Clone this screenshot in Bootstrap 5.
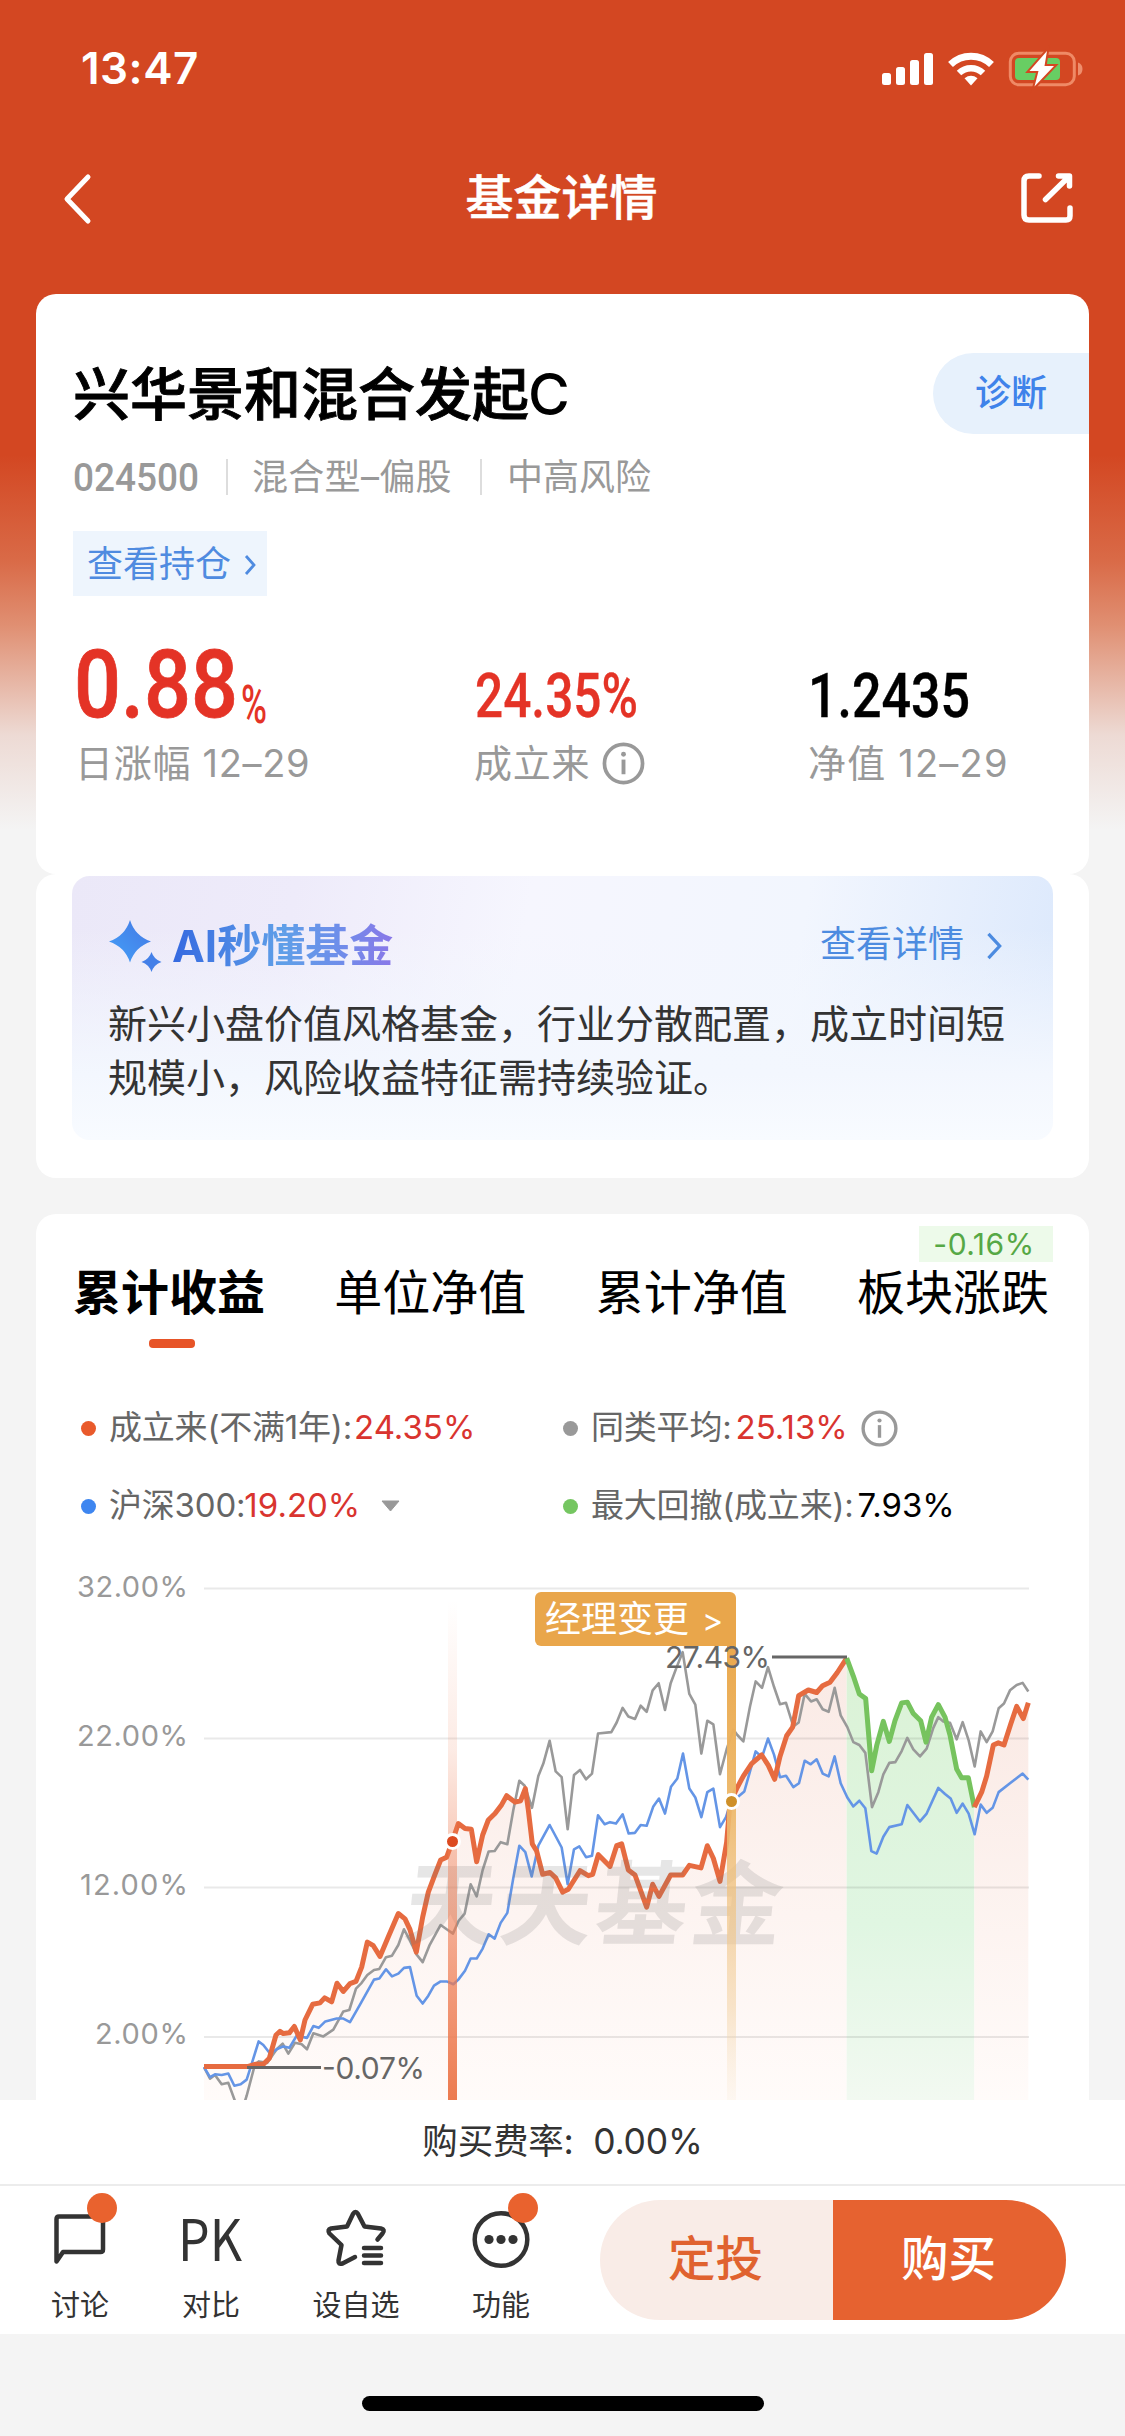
<!DOCTYPE html>
<html lang="zh-CN">
<head>
<meta charset="utf-8">
<meta name="viewport" content="width=device-width, initial-scale=1">
<title>基金详情</title>
<link href="https://cdn.jsdelivr.net/npm/bootstrap@5.3.0/dist/css/bootstrap.min.css" rel="stylesheet">
<style>
  :root { --brand:#d34722; --accent:#e66230; --rise:#e43326; --link:#4f8be0; --mute:#999; }
  body { width:1125px; height:2436px; overflow:hidden; background:#f4f4f4; color:#333;
    font-family:Inter,"Noto Sans CJK SC",sans-serif; font-size:36px; line-height:1.2; }
  svg { overflow:visible; }
  .app { height:2436px; background:linear-gradient(#d34722 0,#d34722 455px,#d96a47 560px,#e08f72 625px,#eddad4 735px,#f4f4f4 830px,#f4f4f4 100%); }
  .status-row { height:137px; padding:0 43px 0 81px; }
  .status-row .clock { font-size:44px; font-weight:600; line-height:139px; letter-spacing:.5px; }
  .title-row { height:120px; padding:2px 52px 0 62px; }
  .title-row h1 { font-size:48px; font-weight:500; line-height:60px; -webkit-text-stroke:.5px #fff; padding-left:10px; }
  .feed { padding:37px 36px 0; height:1843px; overflow:hidden; }
  .panel { background:#fff; border-radius:20px; }
  .p-fund { height:580px; padding:59px 0 0 37px; }
  .fund-name { font-size:57px; font-weight:500; color:#000; line-height:84px; height:81px; -webkit-text-stroke:.9px #000; }
  .fund-name span { margin-left:-1px; -webkit-text-stroke:0; }
  .diag { width:156px; height:81px; border-radius:41px 0 0 41px; background:#e7f1fc; color:#3f83ea; padding-left:42px; line-height:80px; font-weight:500; }
  .meta-row { height:44px; margin-top:21px; color:var(--mute); line-height:44px; }
  .meta-row .divide { width:2px; height:36px; background:#ddd; margin:0 25px 0 27px; }
  .meta-row .kind { width:202px; margin-left:-1px; letter-spacing:.3px; white-space:nowrap; }
  .hold { width:194px; height:65px; margin-top:32px; background:#eef5fd; color:var(--link); padding:2px 11px 0 14px; }
  .stat-row { margin-top:33px; color:var(--mute); }
  .stat-row svg.num { display:block; height:104px; }
  .stat-row .lbl { height:60px; line-height:61px; font-size:38px; letter-spacing:.7px; }
  .p-ai { height:304px; padding:2px 36px 0 36px; }
  .ai-box { height:264px; border-radius:18px; padding:43px 48px 0 36px;
    background:linear-gradient(180deg,rgba(244,248,254,0) 20%,#f3f7fe 75%,#f8fbff 100%),linear-gradient(100deg,#ebe8f8 0,#eeebfa 22%,#f6f6fe 45%,#f2f6fe 72%,#dbe8fc 100%); }
  .ai-title { font-size:44px; font-weight:700; line-height:52px; margin-left:8px; background:linear-gradient(90deg,#3569e0,#5f9fe8 50%,#6e8eea 75%,#8a78e8); -webkit-background-clip:text; background-clip:text; color:transparent; }
  .ai-link { color:#4c8be0; position:relative; top:-1px; }
  .ai-copy { font-size:39px; line-height:54px; margin:24px 0 0; white-space:nowrap; }
  .p-chart { height:922px; margin-top:36px; border-radius:20px 20px 0 0; }
  .tab-row { padding:49px 40px 0 37px; height:140px; }
  .tab-row .tab { font-size:48px; line-height:60px; color:#000; position:relative; white-space:nowrap; }
  .tab-row .active { font-weight:700; }
  .tab-row .active::after { content:""; position:absolute; left:76px; top:76px; width:46px; height:9px; border-radius:4px; background:#e75427; }
  .drop-tag { position:absolute; left:62px; top:-37px; width:134px; height:36px; background:#edfaea; color:#56a845; font-size:30px; line-height:36px; text-align:center; letter-spacing:.5px; padding-right:4px; }
  .legend { padding:48px 0 0 45px; font-size:33px; color:#666; }
  .legend .item { height:52px; white-space:nowrap; }
  .legend .item + .item { margin-top:26px; }
  .legend .col-l { width:482px; }
  .legend .dot { width:15px; height:15px; border-radius:50%; margin-right:13px; flex:none; }
  .legend span { letter-spacing:-.2px; }
  .legend b { font-weight:400; color:#d9342f; letter-spacing:0; margin-left:2px; }
  .legend .col-r b { margin-left:4px; }
  .chart { display:block; margin-top:14px; overflow:hidden; }
  .fee { height:84px; background:#fff; line-height:84px; color:#333; font-size:35.500px; letter-spacing:-.2px; }
  .tools { height:150px; background:#fff; border-top:2px solid #ececec; padding-top:16px; padding-left:36px; }
  .tool { font-size:29px; line-height:36px; position:relative; text-align:center; color:#333; }
  .tool svg { display:block; margin:7px auto 19px; }
  .reddot { position:absolute; width:30px; height:30px; border-radius:50%; background:#e9622e; top:-9px; }
  .act { width:233px; height:120px; font-size:47.500px; font-weight:500; line-height:117px; text-align:center; padding-right:2px; }
  .act-l { background:#f9ece7; color:#e0622f; border-radius:60px 0 0 60px; }
  .act-r { background:var(--accent); color:#fff; border-radius:0 60px 60px 0; }
  .home { height:102px; background:#f4f4f4; padding-top:62px; }
  .home div { width:402px; height:15px; border-radius:8px; background:#000; }
</style>
<script src="https://cdn.jsdelivr.net/npm/bootstrap@5.3.0/dist/js/bootstrap.bundle.min.js"></script>
</head>
<body>
<div class="app d-flex flex-column">
  <div class="status-row d-flex justify-content-between align-items-center text-white">
    <span class="clock">13:47</span>
    <svg width="201" height="36" viewBox="881 51 201 36" fill="#fff">
      <rect x="882" y="73" width="9" height="12" rx="2.5"/><rect x="896" y="67" width="9" height="18" rx="2.5"/><rect x="910" y="60" width="9" height="25" rx="2.5"/><rect x="924" y="53" width="9" height="32" rx="2.5"/>
      <g fill="none" stroke="#fff" stroke-width="7"><path d="M950.5 64.500a29.500 29.500 0 0 1 41 0"/><path d="M959 73a17.500 17.500 0 0 1 24 0" stroke-width="6.500"/></g>
      <path d="M971 85.500l-6.500-7.300q6.500-4.800 13 0z"/>
      <rect x="1010.300" y="53.300" width="64" height="31.500" rx="8.500" fill="none" stroke="#ef8a66" stroke-width="3"/>
      <rect x="1015" y="58" width="45" height="22" rx="4" fill="#68ce63"/>
      <path d="M1078 62.500q4.500 1.500 4.500 6.500t-4.500 6.500z" fill="#ee8e6d"/>
      <path d="M1047 51l-17.500 20h9l-4 15.500 19.500-20.500h-9.500z" stroke="#d34722" stroke-width="4" paint-order="stroke"/>
    </svg>
  </div>
  <div class="title-row d-flex justify-content-between align-items-center text-white">
    <svg width="30" height="52" viewBox="0 0 30 52" fill="none" stroke="#fff" stroke-width="5" stroke-linecap="round" stroke-linejoin="round"><path d="M26 5L5 27l21 22"/></svg>
    <h1 class="m-0">基金详情</h1>
    <svg width="52" height="52" viewBox="1021 173 52 52" fill="none" stroke="#fff" stroke-width="5.500" stroke-linecap="round" stroke-linejoin="round"><path d="M1039 177h-10q-5 0-5 5v34q0 5 5 5h37q4 0 4-4v-8M1058.500 177h11v10M1068.500 178L1045.500 200.500"/></svg>
  </div>

  <main class="feed">
    <section class="panel p-fund">
      <div class="d-flex justify-content-between">
        <div class="fund-name">兴华景和混合发起<span>C</span></div>
        <div class="diag">诊断</div>
      </div>
      <div class="meta-row d-flex align-items-center">
        <svg width="126" height="40"><text x="0" y="34" font-size="39.500" font-weight="500" fill="#999" font-family="Roboto" textLength="126" lengthAdjust="spacingAndGlyphs">024500</text></svg>
        <span class="divide"></span><span class="kind">混合型–偏股</span>
        <span class="divide" style="margin-left:26px"></span><span>中高风险</span>
      </div>
      <div class="hold d-flex align-items-center justify-content-between"><span>查看持仓</span>
        <svg width="12" height="22" viewBox="0 0 12 22" fill="none" stroke="#4f8be0" stroke-width="2.800"><path d="M2 2l8 9-8 9"/></svg></div>
      <div class="stat-row d-flex">
        <div style="width:401px">
          <svg class="num" width="220" font-family="Roboto" font-weight="500" fill="#e43326"><text x="1" y="88" font-size="95" stroke="#e43326" stroke-width=".8" textLength="164" lengthAdjust="spacingAndGlyphs">0.88</text><text x="168" y="94" font-size="53" textLength="26" lengthAdjust="spacingAndGlyphs">%</text></svg>
          <div class="lbl" style="padding-left:2px">日涨幅 12–29</div>
        </div>
        <div style="width:334px">
          <svg class="num" width="200" font-family="Roboto" font-weight="500" fill="#e43326"><text x="1" y="88" font-size="61" stroke="#e43326" stroke-width=".3" textLength="163" lengthAdjust="spacingAndGlyphs">24.35%</text></svg>
          <div class="lbl d-flex align-items-center">成立来
            <svg style="margin-left:12px" width="43" height="43" viewBox="0 0 44 44" fill="none" stroke="#999" stroke-width="3.800"><circle cx="22" cy="22" r="19.500"/><path d="M22 18v15" stroke-width="4"/><circle cx="22" cy="12.500" r="2.500" fill="#999" stroke="none"/></svg></div>
        </div>
        <div>
          <svg class="num" width="200" font-family="Roboto" font-weight="500" fill="#000"><text x="0" y="88" font-size="61" stroke="#000" stroke-width=".4" textLength="162" lengthAdjust="spacingAndGlyphs">1.2435</text></svg>
          <div class="lbl" style="letter-spacing:1.2px">净值 12–29</div>
        </div>
      </div>
    </section>

    <section class="panel p-ai">
      <div class="ai-box">
        <div class="d-flex align-items-center">
          <svg width="56" height="54" viewBox="0 0 56 54"><defs><linearGradient id="st" x1="0" y1="1" x2="1" y2="0"><stop offset="0" stop-color="#44a0f8"/><stop offset="1" stop-color="#4478e4"/></linearGradient></defs>
            <path fill="url(#st)" d="M22 1q5 16 21 21.500q-16 5.500-21 21q-5-15.500-21-21q16-5.500 21-21.500z"/><path fill="#4480e8" d="M43.500 33q2.500 7.500 10 10q-7.500 2.500-10 10q-2.500-7.500-10-10q7.500-2.500 10-10z"/></svg>
          <span class="ai-title">AI秒懂基金</span>
          <span class="ai-link ms-auto">查看详情</span>
          <svg style="margin-left:21px" width="20" height="28" viewBox="0 0 20 30" fill="none" stroke="#4c8be0" stroke-width="3.500"><path d="M3 2l12 13L3 28"/></svg>
        </div>
        <p class="ai-copy">新兴小盘价值风格基金，行业分散配置，成立时间短<br>规模小，风险收益特征需持续验证。</p>
      </div>
    </section>

    <section class="panel p-chart">
      <div class="tab-row d-flex justify-content-between">
        <div class="tab active">累计收益</div><div class="tab">单位净值</div><div class="tab">累计净值</div>
        <div class="tab">板块涨跌<span class="drop-tag">-0.16%</span></div>
      </div>
      <div class="legend d-flex">
        <div class="col-l">
          <div class="item d-flex align-items-center"><i class="dot" style="background:#e95a2b"></i><span>成立来(不满1年):</span><b>24.35%</b></div>
          <div class="item d-flex align-items-center"><i class="dot" style="background:#3e86f0"></i><span>沪深300:</span><b style="margin-left:-1px">19.20%</b><svg style="margin-left:21px" width="19" height="12"><path d="M1 1h17l-8.500 10z" fill="#999" stroke="#999" stroke-linejoin="round"/></svg></div>
        </div>
        <div class="col-r">
          <div class="item d-flex align-items-center"><i class="dot" style="background:#999"></i><span>同类平均:</span><b>25.13%</b><svg style="margin-left:13px" width="37" height="37" viewBox="0 0 44 44" fill="none" stroke="#999" stroke-width="4"><circle cx="22" cy="22" r="19.500"/><path d="M22 18v15"/><circle cx="22" cy="12.500" r="2.500" fill="#999" stroke="none"/></svg></div>
          <div class="item d-flex align-items-center"><i class="dot" style="background:#75c661"></i><span>最大回撤(成立来):</span><b class="text-black">7.93%</b></div>
        </div>
      </div>
      <svg class="chart" width="1053" height="554" viewBox="36 1546 1053 554" font-family="Inter,'Noto Sans CJK SC',sans-serif">
        <defs>
          <linearGradient id="fo" x1="0" y1="0" x2="0" y2="1"><stop offset="0" stop-color="#f9e6e0" stop-opacity=".85"/><stop offset="1" stop-color="#fffaf8" stop-opacity=".8"/></linearGradient>
          <linearGradient id="fg" x1="0" y1="0" x2="0" y2="1"><stop offset="0" stop-color="#dbf2d6"/><stop offset=".6" stop-color="#e0f6e2"/><stop offset="1" stop-color="#f2f9f1"/></linearGradient>
          <linearGradient id="b1" x1="0" y1="0" x2="0" y2="1"><stop offset="0" stop-color="#ee7a50" stop-opacity="0"/><stop offset=".3" stop-color="#ee7a50" stop-opacity=".15"/><stop offset=".7" stop-color="#ee7a50" stop-opacity=".65"/><stop offset="1" stop-color="#ec7b50"/></linearGradient>
          <linearGradient id="b2" x1="0" y1="0" x2="0" y2="1"><stop offset="0" stop-color="#eaa84c"/><stop offset=".35" stop-color="#edb768" stop-opacity=".95"/><stop offset=".8" stop-color="#f2cf9c" stop-opacity=".5"/><stop offset="1" stop-color="#f5dfc0" stop-opacity=".15"/></linearGradient>
        </defs>
        <g transform="translate(180 1560) scale(.33333 .35714)"><path id="areaO" fill="url(#fo)"/><path id="areaG" fill="url(#fg)"/><path id="areaP" fill="url(#fo)"/></g>
        <g stroke="#000" stroke-opacity=".085" stroke-width="2"><path d="M204 1588.500H1029M204 1738.500H1029M204 1887.500H1029M204 2037H1029"/></g>
        <g font-size="29" fill="#999" text-anchor="end"><text x="188" y="1597" textLength="111">32.00%</text><text x="188" y="1746" textLength="111">22.00%</text><text x="188" y="1895" textLength="108">12.00%</text><text x="188" y="2044" textLength="93">2.00%</text></g>
        <g transform="translate(180 1560) scale(.33333 .35714)" fill="none" stroke-linejoin="round">
          <g stroke-width="2.600"><path id="gray" stroke="#999" vector-effect="non-scaling-stroke"/><path id="blue" stroke="#6495e6" vector-effect="non-scaling-stroke"/></g>
          <g stroke-width="5"><path id="red1" stroke="#e66b40" vector-effect="non-scaling-stroke"/><path id="green" stroke="#76c35e" vector-effect="non-scaling-stroke"/><path id="red2" stroke="#e66b40" vector-effect="non-scaling-stroke"/></g>
        </g>
        <g transform="translate(592 1946) skewX(-6)"><text x="-2" y="-8" text-anchor="middle" font-family="Noto Sans CJK SC" font-weight="700" font-size="92" fill="#777" fill-opacity=".18" textLength="378">天天基金</text></g>
        <rect x="448" y="1600" width="9" height="500" fill="url(#b1)"/>
        <rect x="727" y="1640" width="9" height="460" fill="url(#b2)"/>
        <path d="M247 2067.500H321M772 1657H847" stroke="#666" stroke-width="3"/>
        <g font-size="30" fill="#666"><text x="322" y="2079" textLength="103">-0.07%</text><text x="665" y="1668" textLength="105">27.43%</text></g>
        <rect x="535" y="1592" width="201" height="54" rx="6" fill="#e9a64b"/>
        <text x="545" y="1632" font-size="36" fill="#fff"><tspan>经理变更</tspan><tspan x="702" font-size="32">&gt;</tspan></text>
        <g stroke="#fff" stroke-width="3"><circle cx="452.500" cy="1841.500" r="7" fill="#dc4a20"/><circle cx="731.500" cy="1801.500" r="7" fill="#cf9029"/></g>
      </svg>
    </section>
  </main>

  <div class="fee text-center">购买费率:&nbsp; 0.00%</div>
  <div class="tools d-flex">
    <div class="tool" style="width:88px"><svg width="60" height="60" viewBox="50 2209 60 60" fill="none" stroke="#333" stroke-width="4.500" stroke-linejoin="round"><path d="M56.500 2261.500V2219q0-2.500 2.500-2.500h41.500q2.500 0 2.500 2.500v30.500q0 2.500-2.500 2.500H63z"/></svg>讨论<i class="reddot" style="left:51px"></i></div>
    <div class="tool" style="width:88px; margin-left:43px"><svg width="62" height="60" viewBox="0 0 62 60"><text x="-2" y="52" font-size="57" font-weight="400" font-family="Noto Sans CJK SC" fill="#333" textLength="64" lengthAdjust="spacingAndGlyphs">PK</text></svg>对比</div>
    <div class="tool" style="width:100px; margin-left:51px"><svg width="62" height="60" viewBox="326 2209 62 60" fill="none" stroke="#333" stroke-width="4.500" stroke-linecap="round" stroke-linejoin="round"><path d="M378.500 2239.500l5-6q3-4-1.500-5l-16.500-2-6.500-12.500q-2.500-4-5 0l-6 12.500-16 2q-4 1-1.500 5l12 11.500-3 15.500q-.5 4.500 4 3l12.500-6.500"/><path d="M365 2248h17M365 2255.500h17M365 2263h17"/></svg>设自选</div>
    <div class="tool" style="width:88px; margin-left:51px"><svg width="60" height="60" viewBox="470.500 2209 60 60"><circle cx="500.500" cy="2239.500" r="26.300" fill="none" stroke="#333" stroke-width="4.500"/><g fill="#333"><circle cx="488.500" cy="2239.500" r="4.600"/><circle cx="500.500" cy="2239.500" r="4.600"/><circle cx="512.500" cy="2239.500" r="4.600"/></g></svg>功能<i class="reddot" style="left:51px"></i></div>
    <div class="d-flex" style="margin-left:55px; margin-top:-2px"><div class="act act-l">定投</div><div class="act act-r">购买</div></div>
  </div>
  <div class="home d-flex justify-content-center"><div></div></div>
</div>
<script>
  const red1 = "72,1418 205,1418 225,1412 250,1412 268,1395 288,1330 300,1320 310,1326 328,1324 343,1306 361,1344 375,1288 398,1244 420,1240 434,1226 455,1237 471,1185 490,1208 510,1186 528,1180 545,1140 562,1070 580,1080 600,1110 625,1055 655,990 675,1005 690,1035 709,1098 728,1000 745,930 765,880 782,840 800,832 817,788 835,738 855,752 874,754 890,845 908,770 925,728 945,710 965,685 980,660 1005,678 1022,674 1036,640 1045,700 1057,795 1070,815 1088,880 1110,875 1127,890 1148,930 1165,922 1200,870 1225,884 1238,880 1255,825 1290,858 1310,800 1325,795 1345,868 1365,882 1400,972 1418,908 1437,942 1472,882 1508,882 1528,855 1563,862 1582,800 1600,835 1620,900 1640,790 1650,680 1670,640 1690,605 1715,570 1745,546 1765,575 1784,614 1800,550 1820,492 1838,468 1856,380 1885,364 1910,371 1928,352 1950,342 1972,315 2000,275";
  const green = "2000,275 2020,325 2038,375 2057,388 2075,590 2090,520 2110,452 2128,508 2145,450 2165,400 2182,398 2200,430 2222,450 2238,510 2255,440 2275,405 2295,440 2310,490 2330,585 2345,610 2365,610 2383,692";
  const red2 = "2383,692 2405,650 2420,605 2440,518 2455,512 2472,518 2492,460 2510,410 2530,444 2545,400";
  const gray = "72,1420 90,1452 105,1442 125,1468 145,1464 165,1515 180,1560 200,1500 225,1412 237,1404 262,1408 290,1370 308,1354 325,1382 345,1352 365,1356 381,1370 400,1325 430,1334 460,1315 490,1264 508,1260 528,1200 545,1184 562,1162 582,1148 598,1145 618,1112 636,1108 655,1078 672,1034 690,1065 710,1105 728,1126 748,1080 782,1022 800,1034 819,1046 836,1010 854,990 872,908 890,942 908,868 926,816 944,815 962,790 982,796 1000,700 1018,618 1034,632 1056,694 1075,605 1090,570 1109,506 1127,592 1145,608 1163,754 1182,602 1200,588 1218,614 1236,598 1254,486 1294,482 1310,455 1328,414 1345,438 1365,445 1382,408 1400,425 1418,365 1436,345 1455,420 1472,345 1490,300 1508,258 1528,375 1546,405 1564,542 1582,450 1600,460 1620,600 1640,530 1660,475 1672,490 1690,508 1710,410 1727,340 1746,358 1764,300 1782,355 1800,404 1818,400 1840,466 1856,455 1874,375 1893,396 1910,390 1928,418 1946,425 1964,358 1982,435 2002,468 2020,510 2038,518 2056,540 2076,692 2095,650 2110,600 2128,568 2146,566 2165,535 2182,498 2200,530 2220,550 2240,528 2260,470 2275,440 2290,452 2310,456 2330,502 2348,454 2366,505 2384,578 2402,480 2420,510 2438,480 2456,415 2472,402 2490,365 2510,350 2528,344 2545,368";
  const blue = "72,1420 90,1448 105,1440 125,1442 145,1438 163,1472 182,1468 200,1455 212,1420 236,1348 250,1358 270,1382 290,1370 310,1362 328,1366 350,1332 381,1338 400,1305 416,1310 436,1292 470,1284 490,1284 510,1294 540,1245 582,1175 598,1172 618,1146 636,1166 655,1158 672,1142 690,1140 700,1180 710,1220 728,1242 745,1220 762,1192 782,1180 800,1180 820,1188 835,1175 855,1150 872,1116 890,1116 908,1088 926,1048 944,1060 962,1016 982,988 1000,890 1018,800 1036,818 1055,886 1075,800 1109,742 1145,805 1163,908 1182,810 1198,802 1218,832 1236,828 1254,715 1274,740 1290,734 1308,738 1328,712 1346,766 1365,764 1382,742 1400,744 1420,690 1437,668 1455,710 1473,635 1492,612 1509,542 1528,640 1546,665 1564,720 1582,650 1600,640 1620,748 1638,720 1655,670 1675,662 1693,648 1727,536 1746,552 1764,500 1782,545 1800,608 1818,604 1840,636 1857,625 1874,562 1892,572 1910,558 1928,598 1946,606 1964,550 1982,625 2002,665 2020,690 2038,674 2056,695 2074,815 2090,822 2110,775 2128,748 2165,740 2182,686 2220,732 2240,710 2275,638 2295,655 2312,668 2330,708 2348,682 2366,710 2384,768 2402,685 2420,708 2438,694 2456,650 2490,625 2528,598 2545,615";
  const set = (id, d) => document.getElementById(id).setAttribute("d", d);
  const line = p => "M" + p.split(" ").join("L");
  const area = p => line(p) + "V1512H" + p.split(",")[0] + "Z";
  Object.entries({ red1, green, red2, gray, blue }).forEach(([id, p]) => set(id, line(p)));
  set("areaO", area(red1)); set("areaG", area(green)); set("areaP", area(red2));
</script>
</body>
</html>
